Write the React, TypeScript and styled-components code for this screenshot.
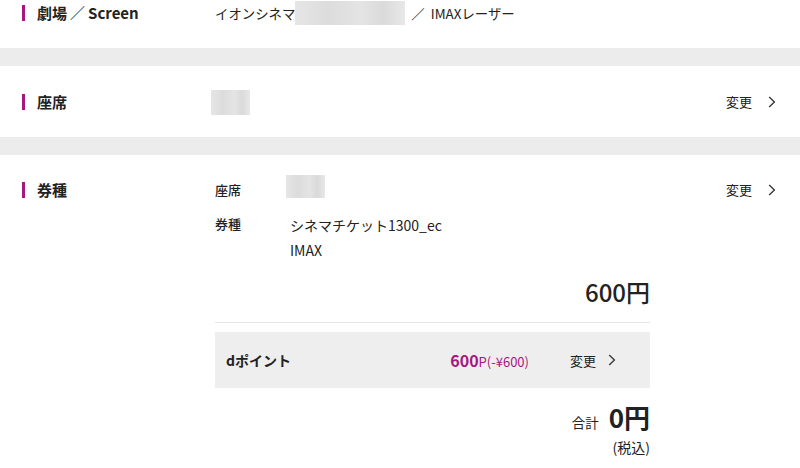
import React from "react";
import styled, { createGlobalStyle } from "styled-components";

const Global = createGlobalStyle`
  html, body { margin: 0; padding: 0; background: #fff; }
  body {
    font-family: "Noto Sans CJK JP", "Noto Sans", sans-serif;
    color: #222;
    -webkit-font-smoothing: antialiased;
  }
`;

const MAGENTA = "#a8167f";

const Page = styled.div`
  width: 800px;
  height: 468px;
  overflow: hidden;
  background: #ececec;
  display: flex;
  flex-direction: column;
  gap: 18px;
`;

const Section = styled.section<{ $top?: number; $bottom?: number }>`
  background: #fff;
  display: grid;
  grid-template-columns: 215px 435px 1fr;
  align-items: start;
  padding: ${(p) => p.$top ?? 26}px 0 ${(p) => p.$bottom ?? 25}px;
`;

const Title = styled.h2`
  margin: 0;
  display: flex;
  align-items: center;
  gap: 12px;
  padding-left: 22px;
  font-size: 15px;
  font-weight: 700;
  line-height: 20px;
  height: 20px;
  white-space: nowrap;
  &::before {
    content: "";
    display: block;
    width: 3px;
    height: 16px;
    background: ${MAGENTA};
  }
`;

const TitleSlash = styled.span`
  font-weight: 400;
  margin: 0 3px;
`;

const Value = styled.div`
  display: flex;
  align-items: center;
  font-size: 13.4px;
  line-height: 20px;
  height: 20px;
  white-space: nowrap;
`;

const Slash = styled.span`
  margin: 0 6px;
`;

const Blur = styled.span<{ $w: number; $h: number }>`
  display: inline-block;
  width: ${(p) => p.$w}px;
  height: ${(p) => p.$h}px;
  background: linear-gradient(90deg, #e6e6e6, #dcdcdc 30%, #e4e4e4 60%, #dadada 80%, #e8e8e8);
  filter: blur(0.6px);
`;

const ChangeLink = styled.a`
  justify-self: end;
  margin-right: 24px;
  display: flex;
  align-items: center;
  gap: 16px;
  font-size: 13px;
  line-height: 20px;
  height: 20px;
  color: #222;
  text-decoration: none;
`;

const Chevron = () => (
  <svg width="8" height="12" viewBox="0 0 8 12" fill="none">
    <path d="M1.2 1 L6.4 6 L1.2 11" stroke="#333" strokeWidth="1.3" />
  </svg>
);

const Detail = styled.div`
  display: flex;
  flex-direction: column;
`;

const Row = styled.div<{ $gap?: number }>`
  display: grid;
  grid-template-columns: 71px 1fr;
  margin-bottom: ${(p) => p.$gap ?? 0}px;
`;

const Label = styled.div`
  font-size: 13px;
  font-weight: 500;
  line-height: 20px;
`;

const Lines = styled.div`
  font-size: 14px;
  line-height: 25px;
  margin-top: -1px;
  padding-left: 4px;
`;

const Price = styled.div`
  text-align: right;
  font-size: 24px;
  font-weight: 500;
  line-height: 30px;
  margin-top: 14px;
  padding-bottom: 15px;
  border-bottom: 1px solid #e6e6e6;
`;

const PointBox = styled.div`
  margin-top: 9px;
  background: #eeeeee;
  height: 56px;
  display: flex;
  align-items: center;
  padding: 0 34px 0 11px;
`;

const PointName = styled.div`
  font-size: 14px;
  font-weight: 700;
  flex: 1;
`;

const PointValue = styled.div`
  color: ${MAGENTA};
  font-size: 16px;
  font-weight: 700;
  margin-right: 41px;
  small {
    font-size: 13px;
    font-weight: 400;
  }
`;

const InlineChange = styled.span`
  display: flex;
  align-items: center;
  gap: 12px;
  font-size: 13px;
`;

const TotalRow = styled.div`
  margin-top: 14px;
  display: flex;
  justify-content: flex-end;
  align-items: baseline;
  gap: 10px;
  line-height: 30px;
  height: 30px;
`;

const TotalLabel = styled.span`
  font-size: 13.5px;
`;

const TotalValue = styled.span`
  font-size: 26px;
  font-weight: 700;
`;

const Tax = styled.div`
  text-align: right;
  font-size: 14px;
  line-height: 20px;
  margin-top: 5px;
`;

export default function App() {
  return (
    <>
      <Global />
      <Page>
        <Section $top={3} $bottom={25}>
          <Title>
            <span>
              劇場<TitleSlash>／</TitleSlash>Screen
            </span>
          </Title>
          <Value>
            イオンシネマ
            <Blur $w={110} $h={24} />
            <Slash>／</Slash>
            IMAXレーザー
          </Value>
        </Section>

        <Section>
          <Title>座席</Title>
          <Value>
            <Blur $w={39} $h={25} style={{ marginLeft: -4 }} />
          </Value>
          <ChangeLink href="#">
            変更 <Chevron />
          </ChangeLink>
        </Section>

        <Section $top={25} $bottom={20}>
          <Title>券種</Title>
          <Detail>
            <Row $gap={14}>
              <Label>座席</Label>
              <Blur $w={39} $h={23} style={{ marginTop: -5 }} />
            </Row>
            <Row>
              <Label>券種</Label>
              <Lines>
                シネマチケット1300_ec
                <br />
                IMAX
              </Lines>
            </Row>
            <Price>600円</Price>
            <PointBox>
              <PointName>dポイント</PointName>
              <PointValue>
                600<small>P(-¥600)</small>
              </PointValue>
              <InlineChange>
                変更 <Chevron />
              </InlineChange>
            </PointBox>
            <TotalRow>
              <TotalLabel>合計</TotalLabel>
              <TotalValue>0円</TotalValue>
            </TotalRow>
            <Tax>(税込)</Tax>
          </Detail>
          <ChangeLink href="#">
            変更 <Chevron />
          </ChangeLink>
        </Section>
      </Page>
    </>
  );
}
